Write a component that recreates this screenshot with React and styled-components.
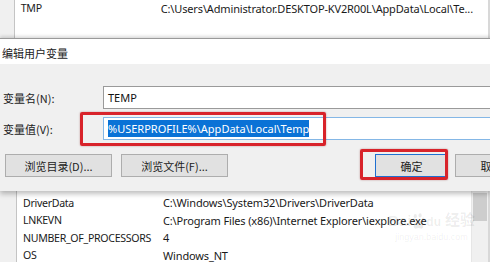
import React from 'react';
import styled, { createGlobalStyle } from 'styled-components';

// Windows "edit user variable" dialog over the environment variable list

const Global = createGlobalStyle`
  html, body {
    margin: 0;
    padding: 0;
    background: #fff;
    overflow: hidden;
  }
  body {
    font-family: "Noto Sans", "Noto Sans CJK SC", sans-serif;
    font-size: 11px;
    color: #1a1a1a;
  }
`

const Screen = styled.div`
  width: 490px;
  height: 262px;
  display: flex;
  flex-direction: column;
  overflow: hidden;
  position: relative;
`

// background list (behind the dialog)
const ListPane = styled.div`
  display: flex;
  height: ${props => props.h}px;
  flex-shrink: 0;
  background: #fff;
`

const Gutter = styled.div`
  width: 16px;
  background: #f0f0f0;
  border-right: 1px solid #c4c4c4;
`

const Rows = styled.div`
  flex: 1;
  display: flex;
  flex-direction: column;
  padding-top: ${props => props.pt || 0}px;
`

const Row = styled.div`
  display: grid;
  grid-template-columns: 140px 1fr;
  height: ${props => props.h || 17.5}px;
  align-items: center;
  padding-left: 6px;
  white-space: nowrap;
`

const Name = styled.span`
  font-size: 10.6px;
  letter-spacing: -0.3px;
`

const Value = styled.span`
  letter-spacing: -0.15px;
`

const ScrollBar = styled.div`
  width: 14px;
  background: ${props => props.blank ? '#fff' : '#f0f0f0'};
  border-left: 1px solid ${props => props.blank ? '#fff' : '#e6e6e6'};
  border-right: 2px solid #d8d8d8;
  padding: 2px 1px 0;
  display: flex;
  flex-direction: column;
`

const Thumb = styled.div`
  height: 28px;
  background: #cdcdcd;
`

// dialog
const Dialog = styled.div`
  display: flex;
  flex-direction: column;
  flex-shrink: 0;
  border-top: 1px solid #9a9a9a;
  box-shadow: 0 -2px 3px rgba(0,0,0,0.12), 0 3px 5px rgba(0,0,0,0.25);
  position: relative;
  z-index: 1;
  font-family: "Noto Sans CJK SC", "Noto Sans", sans-serif;
`

const TitleBar = styled.div`
  height: 25px;
  background: #fff;
  display: flex;
  align-items: center;
  padding: 2px 0 0 2px;
  box-sizing: border-box;
  font-size: 11px;
  color: #222;
`

const Body = styled.div`
  background: #f0f0f0;
  padding: 22px 0 14px;
  display: flex;
  flex-direction: column;
  gap: 8px;
  position: relative;
`

const Field = styled.div`
  display: grid;
  grid-template-columns: 103px 1fr;
  align-items: center;
  margin-right: -20px;
`

const Label = styled.div`
  padding-left: 3px;
  font-size: 11px;
  color: #222;
`

const Input = styled.div`
  height: 21px;
  background: #fff;
  border: 1px solid ${props => props.focused ? '#84b7e6' : '#9a9a9a'};
  display: flex;
  align-items: center;
  padding-left: 4px;
  font-family: "Noto Sans", sans-serif;
  font-size: 11px;
  color: #111;
`

const Selected = styled.span`
  background: #0a72d6;
  color: #fff;
  padding: 1px 0;
`

const ButtonRow = styled.div`
  display: flex;
  margin-top: 6px;
  padding-left: 5px;
  gap: 9px;
  margin-right: -60px;
`

const Button = styled.div`
  width: ${props => props.w || 105}px;
  height: 21px;
  flex-shrink: 0;
  background: #e1e1e1;
  border: 1px solid ${props => props.primary ? '#1f6fd0' : '#adadad'};
  display: flex;
  align-items: center;
  justify-content: center;
  font-size: 11px;
  color: #222;
  margin-left: ${props => props.push || 0}px;
`

// red annotation boxes drawn over the screenshot
const Mark = styled.div`
  position: absolute;
  border: 3px solid #d8232a;
  border-radius: 2px;
  box-shadow: 0 0 2px rgba(120,0,0,0.4);
  pointer-events: none;
`

const Watermark = styled.div`
  position: absolute;
  left: 388px;
  top: 208px;
  color: rgba(0,0,0,0.08);
  font-family: "Liberation Sans", sans-serif;
  display: flex;
  flex-direction: column;
  align-items: center;
  z-index: 2;
  pointer-events: none;
`

const WmTop = styled.div`
  font-size: 15px;
  font-weight: bold;
  display: flex;
  align-items: flex-end;
  gap: 1px;
`

const WmSmall = styled.div`
  font-size: 9px;
  margin-top: 3px;
`

function Paw() {
  return (
    <svg width="13" height="16" viewBox="0 0 16 20" fill="rgba(0,0,0,0.08)">
      <ellipse cx="4" cy="4" rx="2" ry="2.6" />
      <ellipse cx="10" cy="3" rx="2" ry="2.6" />
      <ellipse cx="14" cy="8" rx="1.8" ry="2.3" />
      <ellipse cx="1.8" cy="9" rx="1.8" ry="2.3" />
      <path d="M8 9c-3 0-6 5-6 8 0 2 2 3 3 2.5 1-.4 2-.8 3-.8s2 .4 3 .8c1 .5 3-.5 3-2.5 0-3-3-8-6-8z" />
    </svg>
  );
}

export default function App() {
  return (
    <Screen>
      <Global />
      <ListPane h={38}>
        <Gutter />
        <Rows>
          <Row h={16}>
            <Name>TMP</Name>
            <Value>C:\Users\Administrator.DESKTOP-KV2R00L\AppData\Local\Te...</Value>
          </Row>
        </Rows>
        <ScrollBar blank />
      </ListPane>

      <Dialog>
        <TitleBar>编辑用户变量</TitleBar>
        <Body>
          <Field>
            <Label>变量名(N):</Label>
            <Input>TEMP</Input>
          </Field>
          <Field>
            <Label>变量值(V):</Label>
            <Input focused><Selected>%USERPROFILE%\AppData\Local\Temp</Selected></Input>
          </Field>
          <ButtonRow>
            <Button>浏览目录(D)...</Button>
            <Button>浏览文件(F)...</Button>
            <Button primary w={71} push={138}>确定</Button>
            <Button w={71} push={-2}>取消</Button>
          </ButtonRow>
          <Mark style={{ left: 80, top: 48, width: 240, height: 28 }} />
          <Mark style={{ left: 360, top: 85, width: 82, height: 25 }} />
        </Body>
      </Dialog>

      <ListPane h={80}>
        <Gutter />
        <Rows pt={3}>
          <Row><Name>DriverData</Name><Value>C:\Windows\System32\Drivers\DriverData</Value></Row>
          <Row><Name>LNKEVN</Name><Value>C:\Program Files (x86)\Internet Explorer\iexplore.exe</Value></Row>
          <Row><Name>NUMBER_OF_PROCESSORS</Name><Value>4</Value></Row>
          <Row><Name>OS</Name><Value>Windows_NT</Value></Row>
        </Rows>
        <ScrollBar><Thumb /></ScrollBar>
      </ListPane>

      <Watermark>
        <WmTop>
          <span>Bai</span>
          <Paw />
          <span style={{ fontSize: 12 }}>du</span>
          <span style={{ fontFamily: '"Noto Sans CJK SC"', marginLeft: 3 }}>经验</span>
        </WmTop>
        <WmSmall>jingyan.baidu.com</WmSmall>
      </Watermark>
    </Screen>
  );
}
